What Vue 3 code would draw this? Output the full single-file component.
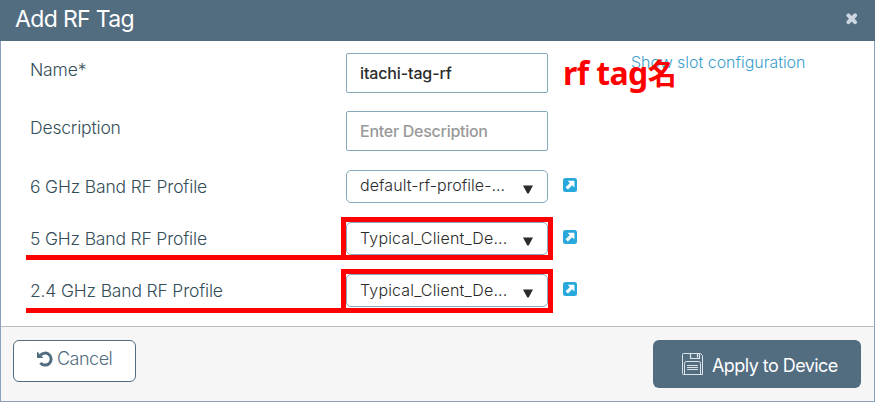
<script setup>
const profiles = [
  { label: '6 GHz Band RF Profile', value: 'default-rf-profile-...', cls: 'six' },
  { label: '5 GHz Band RF Profile', value: 'Typical_Client_De...', cls: 'five', marked: true },
  { label: '2.4 GHz Band RF Profile', value: 'Typical_Client_De...', cls: 'two', marked: true },
]
</script>

<template>
  <div class="modal">
    <header class="head">
      <h1><span>Add RF Tag</span></h1>
      <svg class="close" width="14" height="14" viewBox="0 0 14 14">
        <path d="M3.4 3.4 10.1 10.1M10.1 3.4 3.4 10.1" stroke="#ccd6e0" stroke-width="4" stroke-linecap="round" />
      </svg>
    </header>

    <main class="body">
      <div class="row text-row">
        <label class="name">Name*</label>
        <div class="field value"><span>itachi-tag-rf</span></div>
        <a class="slot">Show slot configuration</a>
        <div class="note"><span class="latin">rf tag</span><span class="kanji">名</span></div>
      </div>
      <div class="row text-row">
        <label class="desc">Description</label>
        <div class="field hint"><span>Enter Description</span></div>
      </div>
      <div v-for="p in profiles" :key="p.label" class="row pick-row" :class="p.cls">
        <label>{{ p.label }}</label>
        <div class="select">
          <span>{{ p.value }}</span>
          <svg width="10" height="9" viewBox="0 0 10 9"><path d="M0 .5h10L5.7 8.5H4.3z" fill="#2b2b2b" /></svg>
        </div>
        <svg class="open" width="14" height="14" viewBox="0 0 14 14">
          <rect width="14" height="14" rx="2.5" fill="#29a8dc" />
          <path d="M4.6 2.7H11.4V9.4L9.2 7.2 4.9 11.5 2.6 9.2 6.9 4.9z" fill="#fff" />
        </svg>
        <template v-if="p.marked">
          <i class="mark-line"></i>
          <i class="mark-box"></i>
        </template>
      </div>
    </main>

    <footer class="foot">
      <button class="cancel">
        <svg width="16" height="16" viewBox="0 0 16 16">
          <path d="M3.5 4.3A6 6 0 1 1 3.4 11.8" fill="none" stroke="#526c80" stroke-width="3" />
          <path d="M0 .6V7H6.4z" fill="#526c80" />
        </svg>
        <span>Cancel</span>
      </button>
      <button class="apply">
        <svg width="22" height="23" viewBox="0 0 22 23" fill="none" stroke="#dce4ea" stroke-width="1">
          <path d="M1.5 .5H18.5L20.5 2.5V21.5H1.5Q.5 21.5 .5 20.5V1.5Q.5 .5 1.5 .5z" />
          <path d="M8.5 .5V5.5H17.5V.5" stroke-width="1.2" />
          <path d="M15.5 1V4.5" stroke-width="1.3" />
          <path d="M2.5 21.5V10.5Q2.5 8.5 4.5 8.5H16.5Q18.5 8.5 18.5 10.5V21.5" />
          <path d="M5 12.5H16M5 14.5H16M5 16.5H16" />
        </svg>
        <span>Apply to Device</span>
      </button>
    </footer>
  </div>
</template>

<style>
body { margin: 0; background: #fff; }
</style>

<style scoped>
* { box-sizing: border-box; }
.modal {
  width: 875px;
  height: 402px;
  display: flex;
  flex-direction: column;
  font-family: Inter, "Liberation Sans", sans-serif;
  font-weight: 300;
  color: #354e58;
  background: #fff;
}
.head {
  height: 41px;
  flex: none;
  display: flex;
  justify-content: space-between;
  padding: 0 16px 0 15px;
  background: #526c80;
}
h1 {
  margin: 0;
  font-size: 23px;
  line-height: 38px;
  font-weight: 400;
  letter-spacing: -0.65px;
  color: #fff;
}
.close { margin-top: 12px; }
.body {
  flex: none;
  height: 285px;
  padding: 12px 0 0 29px;
  border: solid #8aa0bc;
  border-width: 0 1px;
}
.row {
  position: relative;
  display: flex;
  align-items: flex-start;
}
.text-row { height: 58px; }
.pick-row { height: 52px; }
.text-row + .pick-row { margin-top: 1px; }
label {
  width: 316px;
  flex: none;
  font-size: 17.5px;
  line-height: 34px;
  letter-spacing: -0.17px;
}
.field {
  width: 202px;
  height: 40px;
  padding: 0 13px;
  border: 1px solid #86aabb;
  border-radius: 2px;
  font-size: 16px;
  line-height: 38px;
  font-weight: 500;
  letter-spacing: -0.27px;
  white-space: nowrap;
}
.value { color: #2b2b2b; letter-spacing: -0.13px; }
.hint { color: #999; }
.slot {
  margin-left: 83px;
  font-size: 16px;
  line-height: 19px;
  letter-spacing: -0.03px;
  color: #3a9fcb;
}
.note {
  position: absolute;
  left: 533px;
  top: -1px;
  display: flex;
  align-items: baseline;
  font-family: "Noto Sans", "Noto Sans CJK JP", sans-serif;
  font-weight: 700;
  font-size: 32px;
  line-height: 40px;
  letter-spacing: -0.6px;
  color: #f00;
  white-space: nowrap;
}
.kanji { font-family: "Noto Sans CJK JP", sans-serif; font-size: 29px; }
.select {
  width: 202px;
  height: 33px;
  display: flex;
  justify-content: space-between;
  padding: 0 14px 0 13px;
  border: 1px solid #86aabb;
  border-radius: 5px;
  font-size: 16px;
  line-height: 30px;
  letter-spacing: 0.16px;
  color: #2b2b2b;
  white-space: nowrap;
}
.six .select { letter-spacing: 0.05px; line-height: 29px; }
.select svg { margin-top: 14px; }
.open { margin: 8px 0 0 14.5px; }
.mark-line {
  position: absolute;
  left: -4px;
  top: 33px;
  width: 320px;
  height: 5px;
  background: #f00;
}
.mark-box {
  position: absolute;
  left: 311px;
  top: -5px;
  width: 212px;
  height: 43px;
  border: 5px solid #f00;
}
.two .mark-line { top: 34px; }
.two .mark-box { height: 44px; }
.foot {
  flex: 1;
  display: flex;
  justify-content: space-between;
  align-items: flex-start;
  padding: 13px 13px 0 12px;
  background: #f6f6f6;
  border: 1px solid #8aa0bc;
  border-top-color: #bbbebf;
}
button {
  display: flex;
  border-radius: 6px;
  font-family: inherit;
  white-space: nowrap;
}
.cancel {
  width: 123px;
  height: 42px;
  padding: 0 0 0 23px;
  gap: 4px;
  border: 1px solid #526c80;
  background: #fff;
  color: #526c80;
  font-size: 18px;
  line-height: 36px;
  font-weight: 300;
  letter-spacing: -0.5px;
}
.cancel svg { margin-top: 10px; }
.apply {
  width: 208px;
  height: 48px;
  padding: 0 0 0 29px;
  gap: 8px;
  border: 0;
  background: #526c80;
  color: #fff;
  font-size: 18px;
  line-height: 51px;
  font-weight: 400;
  letter-spacing: -0.55px;
}
.apply svg { margin-top: 13px; }
</style>
